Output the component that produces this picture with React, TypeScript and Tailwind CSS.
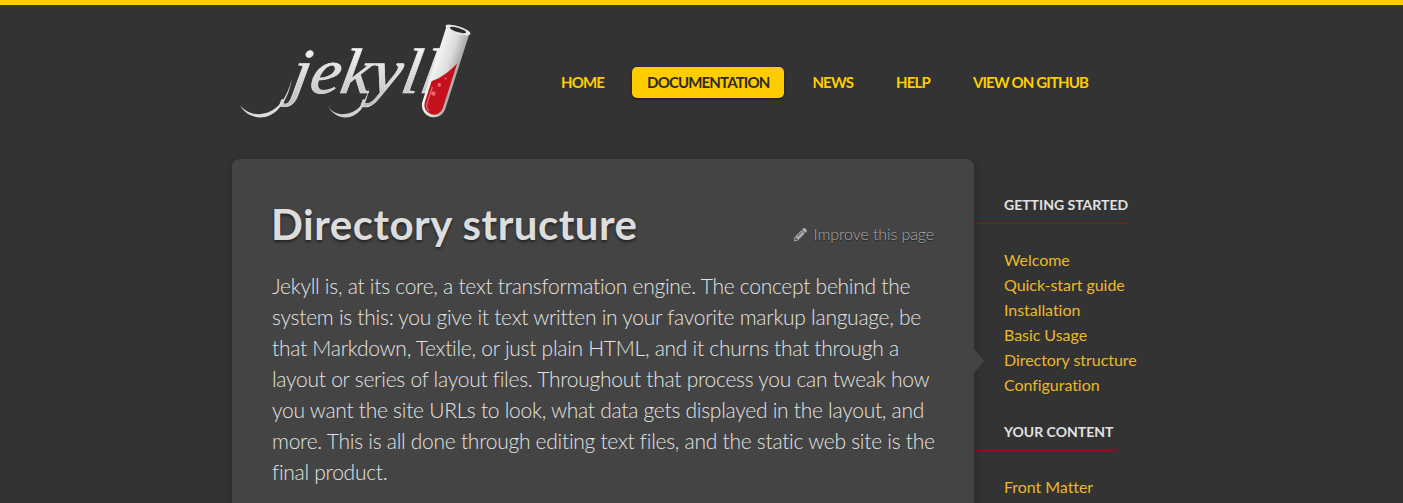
import React from 'react';
import { FaPencilAlt } from 'react-icons/fa';

const navItems = ['Home', 'Documentation', 'News', 'Help', 'View on GitHub'];

const sideNav = [
  {
    title: 'Getting Started',
    links: ['Welcome', 'Quick-start guide', 'Installation', 'Basic Usage', 'Directory structure', 'Configuration'],
  },
  {
    title: 'Your Content',
    links: ['Front Matter', 'Writing posts', 'Working with drafts'],
  },
];

// viewBox uses page coordinates so the tube and swashes are easy to line up with the screenshot
const Logo: React.FC = () => (
  <svg width="248" height="115" viewBox="232 20 248 115">
    <defs>
      <linearGradient id="ink" x1="0" y1="0" x2="0" y2="1">
        <stop offset="0" stopColor="#ffffff" />
        <stop offset="1" stopColor="#bdbdbd" />
      </linearGradient>
      <linearGradient id="glass" x1="0" y1="0" x2="1" y2="0">
        <stop offset="0" stopColor="#f4f4f4" />
        <stop offset="0.55" stopColor="#dcdcdc" />
        <stop offset="1" stopColor="#a8a8a8" />
      </linearGradient>
    </defs>
    <text
      x="289"
      y="93"
      fontFamily="'Liberation Serif', serif"
      fontStyle="italic"
      fontSize="64"
      fill="url(#ink)"
      stroke="#e4e4e4"
      strokeWidth="0.700"
      transform="translate(289 93) skewX(-10) scale(1.07 1) translate(-289 -93)"
    >
      jekyll
    </text>
    <path d="M240 105 C246 113 256 116 266 113 C280 109 288 95 292 78 C289 98 279 114 265 117 C253 119 244 113 240 105 Z" fill="#dcdcdc" />
    <path d="M328 105 C331 113 340 116 350 113 C360 110 366 100 369 88 C367 103 361 114 350 117 C340 119 331 114 328 105 Z" fill="#d0d0d0" />
    <g transform="translate(458 30) rotate(17.800)">
      <path d="M-12 0 H12 V79 A12 12 0 0 1 -12 79 Z" fill="url(#glass)" />
      <path d="M-9.500 57 C-3 52 4 44 9.500 32 V79 A9.500 9.500 0 0 1 -9.500 79 Z" fill="#c4121c" />
      <path d="M-7 62 V79 A7 7 0 0 0 -3 86" fill="none" stroke="#e96a6f" strokeWidth="1.200" />
      <circle cx="-1" cy="58" r="1.800" fill="#e96a6f" />
      <circle cx="3" cy="50" r="1" fill="#e96a6f" />
      <circle cx="-4" cy="68" r="2.200" fill="#e96a6f" />
      <ellipse cx="0" cy="0" rx="13" ry="3.800" fill="#e8e8e8" />
      <ellipse cx="0" cy="0" rx="8.500" ry="2.200" fill="#2c2c2c" />
    </g>
  </svg>
);

const App: React.FC = () => {
  return (
    <div className="h-screen overflow-hidden bg-[#333333] border-t-[5px] border-[#ffcc00] font-['Lato',sans-serif]">
      <div className="w-[939px] mx-auto">
        <header className="flex items-start h-[154px]">
          <div className="w-[240px] shrink-0 pt-[15px]">
            <Logo />
          </div>
          <nav className="flex items-center gap-[13px] ml-[74px] mt-[62px]">
            {navItems.map((item) => (
              <a
                key={item}
                className={
                  item === 'Documentation'
                    ? 'h-[31px] px-[15px] pb-px flex items-center rounded-[5px] bg-[#ffcc00] text-[#2b2b2b] text-[15px] font-bold uppercase tracking-[-0.85px] whitespace-nowrap shadow-[0_1px_3px_rgba(0,0,0,0.5)]'
                    : 'h-[31px] px-[15px] pb-px flex items-center text-[#ffcc00] text-[15px] font-bold uppercase tracking-[-0.85px] whitespace-nowrap'
                }
              >
                {item}
              </a>
            ))}
          </nav>
        </header>

        <div className="flex items-start">
          <article className="relative w-[742px] h-[600px] shrink-0 rounded-[8px] bg-[#444444] px-[40px] pt-[37px] shadow-[0_3px_10px_rgba(0,0,0,0.3)]">
            <div className="flex items-start justify-between">
              <h1 className="-ml-px text-[42px] leading-[56px] font-bold tracking-[0.5px] text-[#dddddd] [text-shadow:0_2px_3px_rgba(0,0,0,0.5)]">
                Directory structure
              </h1>
              <a className="flex items-center gap-[7px] mt-[27px] text-[16px] leading-[22px] font-light tracking-[-0.1px] text-[#adadad] [text-shadow:0_1px_1px_rgba(0,0,0,0.6)]">
                <FaPencilAlt size={13} color="#adadad" />
                Improve this page
              </a>
            </div>
            <p className="mt-[18px] -mr-[4px] text-[21px] leading-[31px] font-light tracking-[-0.27px] text-[#e2e2e2]">
              Jekyll is, at its core, a text transformation engine. The concept behind the system is this: you give it
              text written in your favorite markup language, be that Markdown, Textile, or just plain HTML, and it
              churns that through a layout or series of layout files. Throughout that process you can tweak how you
              want the site URLs to look, what data gets displayed in the layout, and more. This is all done through
              editing text files, and the static web site is the final product.
            </p>
            {/* pointer towards the active side nav item */}
            <div className="absolute left-full top-[190px] w-0 h-0 border-y-[12px] border-y-transparent border-l-[10px] border-l-[#444444]" />
          </article>

          <aside className="flex-1 pt-[36px]">
            {sideNav.map((section) => (
              <div key={section.title} className="mb-[25px]">
                <h4 className="block w-fit pl-[30px] pb-[8px] border-b border-b-[#a30d14] text-[14px] leading-[20px] font-bold uppercase text-[#e2e2e2]">
                  {section.title}
                </h4>
                <ul className="mt-[23px]">
                  {section.links.map((link) => (
                    <li key={link} className="pl-[30px] text-[16px] leading-[25px] tracking-[-0.05px] text-[#e9b92a] font-normal">
                      {link}
                    </li>
                  ))}
                </ul>
              </div>
            ))}
          </aside>
        </div>
      </div>
    </div>
  );
};

export default App;
